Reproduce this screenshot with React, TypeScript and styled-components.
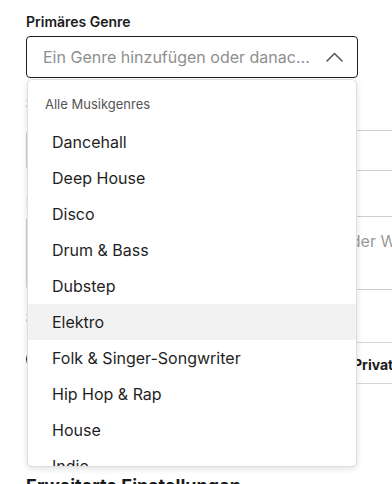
import React from "react";
import styled, { createGlobalStyle } from "styled-components";

const GlobalStyle = createGlobalStyle`
  html, body {
    margin: 0;
    padding: 0;
    overflow: hidden;
    background: #ffffff;
    font-family: Inter, "Noto Sans", Arial, sans-serif;
    color: #1d1d1d;
  }
  * { box-sizing: border-box; }
`;

const Page = styled.div`
  padding: 12px 0 0 26px;
  width: 500px;
`;

const Field = styled.div<{ $top?: number }>`
  position: relative;
  margin-top: ${(p) => p.$top ?? 0}px;
`;

const Label = styled.div<{ $muted?: boolean }>`
  font-size: 14px;
  font-weight: 600;
  line-height: 20px;
  color: ${(p) => (p.$muted ? "#9a9a9a" : "#1a1a1a")};
`;

const SelectWrap = styled.div`
  position: relative;
  width: 332px;
  margin-top: 4px;
`;

const Trigger = styled.div`
  display: flex;
  align-items: center;
  gap: 12px;
  height: 42px;
  padding: 0 14px 0 16px;
  border: 1px solid #1f1f1f;
  border-radius: 4px;
  background: #fff;
`;

const Placeholder = styled.span`
  flex: 1;
  min-width: 0;
  font-size: 16px;
  color: #8e8e8e;
  white-space: nowrap;
  overflow: hidden;
  text-overflow: ellipsis;
`;

const Panel = styled.div`
  position: absolute;
  z-index: 10;
  top: calc(100% + 1px);
  left: 1px;
  right: 1px;
  height: 388px;
  background: #fff;
  border: 1px solid #dedede;
  border-radius: 5px;
  box-shadow: 0 2px 6px rgba(0, 0, 0, 0.12);
  overflow: hidden;
`;

const List = styled.div`
  height: 100%;
  overflow-y: auto;
  scrollbar-width: none;
`;

const GroupHeader = styled.div`
  padding: 16px 17px 12px;
  font-size: 13px;
  line-height: 16px;
  color: #555;
`;

const Option = styled.div<{ $active?: boolean }>`
  height: 36px;
  line-height: 36px;
  padding-left: 24px;
  font-size: 16px;
  color: #1f1f1f;
  background: ${(p) => (p.$active ? "#f2f2f2" : "transparent")};
`;

const TextInput = styled.div<{ $top?: number }>`
  width: 420px;
  height: 41px;
  margin-top: ${(p) => p.$top ?? 0}px;
  border: 1px solid #cfcfcf;
  border-radius: 4px;
`;

const TextArea = styled.div<{ $top?: number }>`
  width: 420px;
  height: 74px;
  margin-top: ${(p) => p.$top ?? 0}px;
  padding: 12px 16px;
  border: 1px solid #cfcfcf;
  border-radius: 4px;
  font-size: 16px;
  line-height: 24px;
  color: #9a9a9a;
  white-space: nowrap;
`;

const RadioRow = styled.div<{ $top?: number }>`
  display: flex;
  align-items: center;
  height: 42px;
  margin-top: ${(p) => p.$top ?? 0}px;
`;

const RadioOption = styled.div`
  display: flex;
  flex-shrink: 0;
  align-items: center;
  gap: 10px;
  width: 314px;
  height: 100%;
  font-size: 14px;
  font-weight: 600;
`;

const RadioCircle = styled.span`
  width: 20px;
  height: 20px;
  margin-top: -8px;
  border-radius: 50%;
  border: 2px solid #1a1a1a;
`;

const RadioCard = styled.div`
  display: flex;
  flex-shrink: 0;
  align-items: center;
  width: 140px;
  height: 100%;
  padding: 2px 0 0 13px;
  border-top: 1px solid #d6d6d6;
  border-bottom: 1px solid #d6d6d6;
  font-size: 14px;
  font-weight: 700;
  color: #1a1a1a;
`;

const SectionTitle = styled.h2<{ $top?: number }>`
  margin: ${(p) => p.$top ?? 0}px 0 0;
  font-size: 18px;
  font-weight: 700;
  line-height: 24px;
  color: #1a1a1a;
`;

const Chevron = () => (
  <svg width="17" height="10" viewBox="0 0 17 10" fill="none">
    <path d="M1 9 L8.5 1.5 L16 9" stroke="#5a5a5a" strokeWidth="1.6" strokeLinecap="round" strokeLinejoin="round" />
  </svg>
);

const genres = [
  "Dancehall",
  "Deep House",
  "Disco",
  "Drum & Bass",
  "Dubstep",
  "Elektro",
  "Folk & Singer-Songwriter",
  "Hip Hop & Rap",
  "House",
  "Indie",
  "Jazz",
  "Latin",
];

export default function App() {
  return (
    <>
      <GlobalStyle />
      <Page>
        <Field>
          <Label>Primäres Genre</Label>
          <SelectWrap>
            <Trigger>
              <Placeholder>Ein Genre hinzufügen oder danach suchen</Placeholder>
              <Chevron />
            </Trigger>
            <Panel>
              <List>
                <GroupHeader>Alle Musikgenres</GroupHeader>
                {genres.map((g) => (
                  <Option key={g} $active={g === "Elektro"}>
                    {g}
                  </Option>
                ))}
              </List>
            </Panel>
          </SelectWrap>
        </Field>
        <Field $top={16}>
          <Label>Sekundäres Genre</Label>
          <TextInput $top={16} />
        </Field>
        <Field $top={21}>
          <Label $muted>Beschreibung</Label>
          <TextArea $top={4}>Beschreibe deinen Track in einem Satz oder Wörtern</TextArea>
        </Field>
        <Field $top={18}>
          <Label>Sichtbarkeit</Label>
          <RadioRow $top={14}>
            <RadioOption>
              <RadioCircle />
              Öffentlich
            </RadioOption>
            <RadioCard>Privat</RadioCard>
          </RadioRow>
        </Field>
        <SectionTitle $top={90}>Erweiterte Einstellungen</SectionTitle>
      </Page>
    </>
  );
}
